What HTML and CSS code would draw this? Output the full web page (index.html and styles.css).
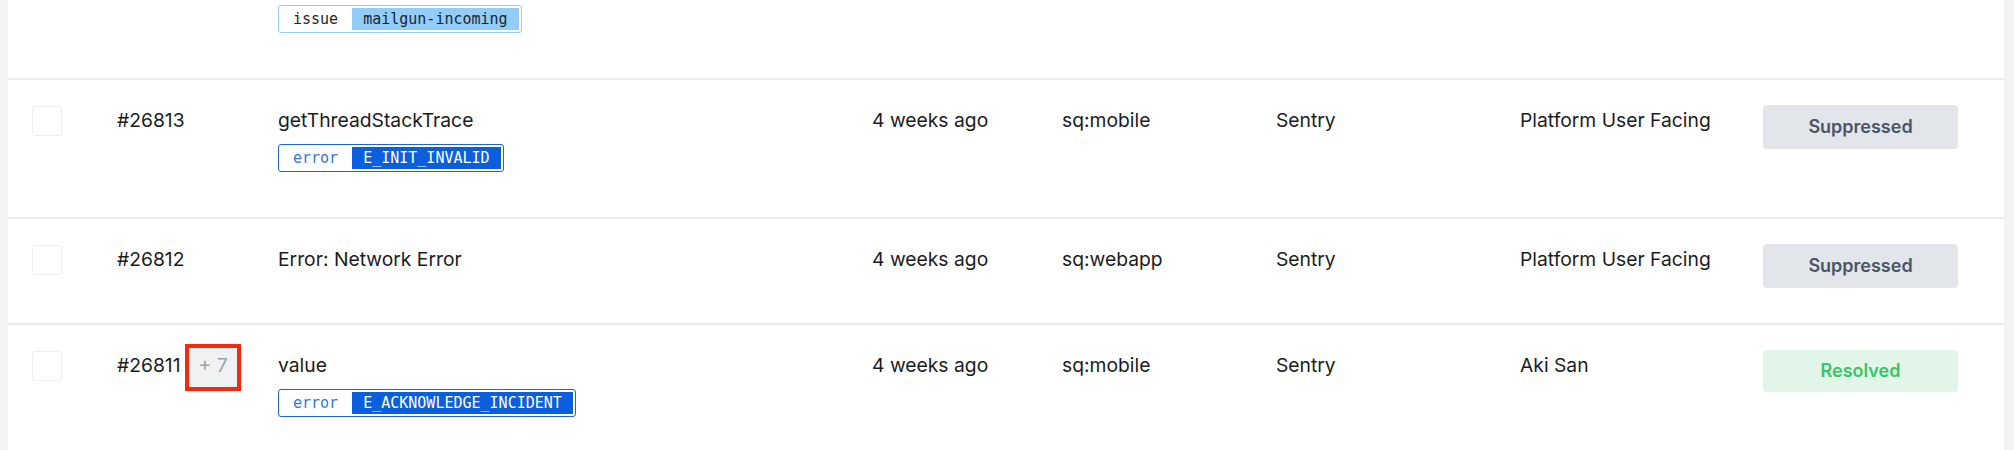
FILE: index.html
```html
<!DOCTYPE html>
<html lang="en">
<head>
<meta charset="utf-8">
<title>Incidents</title>
<link rel="stylesheet" href="styles.css">
</head>
<body>
<div class="panel">
  <div class="row row-partial">
    <div class="cell"></div>
    <div class="cell"></div>
    <div class="cell">
      <span class="tag tag-light"><span class="tag-key">issue</span><span class="tag-val">mailgun-incoming</span></span>
    </div>
  </div>

  <div class="row">
    <div class="cell"><span class="check"></span></div>
    <div class="cell id-cell">#26813</div>
    <div class="cell">
      <div class="title">getThreadStackTrace</div>
      <span class="tag tag-dark"><span class="tag-key">error</span><span class="tag-val">E_INIT_INVALID</span></span>
    </div>
    <div class="cell">4 weeks ago</div>
    <div class="cell">sq:mobile</div>
    <div class="cell">Sentry</div>
    <div class="cell">Platform User Facing</div>
    <div class="cell"><span class="status status-suppressed">Suppressed</span></div>
  </div>

  <div class="row">
    <div class="cell"><span class="check"></span></div>
    <div class="cell id-cell">#26812</div>
    <div class="cell">
      <div class="title">Error: Network Error</div>
    </div>
    <div class="cell">4 weeks ago</div>
    <div class="cell">sq:webapp</div>
    <div class="cell">Sentry</div>
    <div class="cell">Platform User Facing</div>
    <div class="cell"><span class="status status-suppressed">Suppressed</span></div>
  </div>

  <div class="row">
    <div class="cell"><span class="check"></span></div>
    <div class="cell id-cell">#26811<span class="more">+ 7</span></div>
    <div class="cell">
      <div class="title">value</div>
      <span class="tag tag-dark"><span class="tag-key">error</span><span class="tag-val">E_ACKNOWLEDGE_INCIDENT</span></span>
    </div>
    <div class="cell">4 weeks ago</div>
    <div class="cell">sq:mobile</div>
    <div class="cell">Sentry</div>
    <div class="cell">Aki San</div>
    <div class="cell"><span class="status status-resolved">Resolved</span></div>
  </div>
</div>
</body>
</html>
```

FILE: styles.css
```css
html, body {
  margin: 0;
  padding: 0;
}

body {
  background: #f2f3f5;
  padding: 0 10px 0 8px;
  font-family: "Inter", "Liberation Sans", sans-serif;
  font-size: 19.3px;
  color: #1b1c1e;
  height: 450px;
  overflow: hidden;
}

.panel {
  background: #ffffff;
  min-height: 450px;
}

.row {
  display: grid;
  grid-template-columns: 85px 161px 594px 190px 214px 244px 243px 195px;
  align-items: start;
  padding: 26px 46px 35px 24px;
  border-bottom: 2px solid #e9edf1;
  line-height: 28px;
}

.row-partial {
  padding-top: 3px;
}

.cell {
  min-width: 0;
  white-space: nowrap;
}

.check {
  display: block;
  width: 28px;
  height: 28px;
  border: 1px solid #eceef1;
  border-radius: 3px;
  background: #fff;
}

.id-cell {
  display: flex;
  align-items: flex-start;
  gap: 8px;
}

.more {
  margin-top: -3px;
  padding: 3px 9px 8px 10px;
  background: #f0f1f3;
  color: #9ca1a9;
  outline: 4px solid #f5290d;
}

.title {
  line-height: 28px;
}

.tag {
  display: inline-flex;
  margin-top: 10px;
  margin-bottom: 10px;
  padding: 2px;
  border: 1px solid;
  border-radius: 3px;
  font-family: "DejaVu Sans Mono", "Liberation Mono", monospace;
  font-size: 15px;
  line-height: 22px;
}

.row-partial .tag {
  margin-top: 0;
}

.tag-key {
  padding: 0 14px 0 12px;
}

.tag-val {
  padding: 0 11px;
}

.tag-light {
  border-color: #93cdf6;
}

.tag-light .tag-key {
  color: #1f2226;
}

.tag-light .tag-val {
  background: #92cdf8;
  color: #1c2633;
}

.tag-dark {
  border-color: #1e63d8;
}

.tag-dark .tag-key {
  color: #3776dc;
}

.tag-dark .tag-val {
  background: #0b5fdc;
  color: #ffffff;
}

.status {
  display: flex;
  align-items: center;
  justify-content: center;
  height: 44px;
  margin-top: -1px;
  border-radius: 4px;
  font-size: 18px;
  font-weight: 600;
}

.status-suppressed {
  background: #e2e5e9;
  color: #4a5567;
}

.status-resolved {
  height: 42px;
  background: #e1f6e9;
  color: #39c46a;
}
```
